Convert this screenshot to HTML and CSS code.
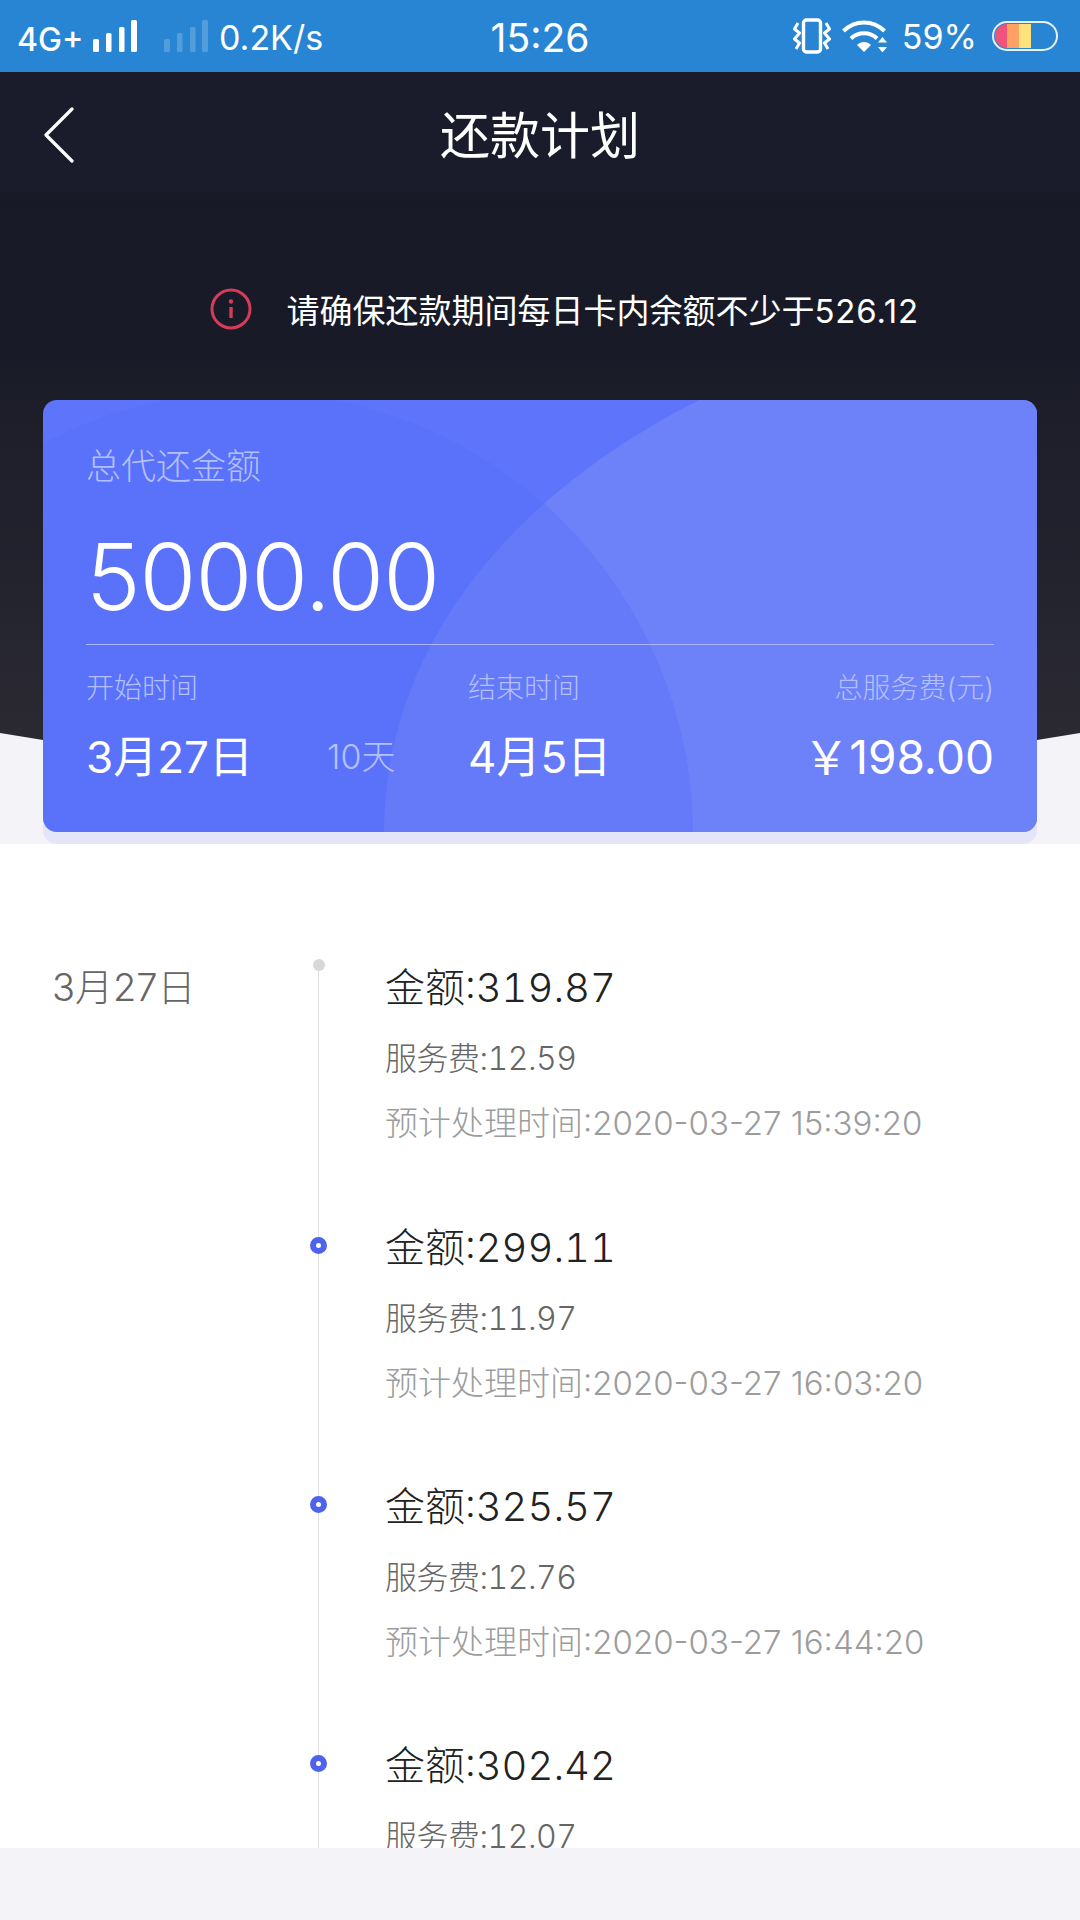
FILE: index.html
```html
<!DOCTYPE html>
<html lang="zh-CN">
<head>
  <meta charset="UTF-8">
  <meta name="viewport" content="width=device-width, initial-scale=1.0">
  <title>还款计划</title>
  <link rel="stylesheet" href="styles.css">
</head>
<body>
  <div class="page">
    <!-- Status bar -->
    <div class="status">
      <div class="status-left">
        <span class="net">4G+</span>
        <svg class="signal" width="44" height="34" viewBox="0 0 44 34" fill="#fff">
          <rect x="0" y="20" width="6" height="13" rx="1.5"/>
          <rect x="13" y="14" width="5.5" height="19" rx="1.5"/>
          <rect x="26" y="8" width="5.5" height="25" rx="1.5"/>
          <rect x="38" y="1" width="6" height="32" rx="1.5"/>
        </svg>
        <svg class="signal signal-off" width="44" height="34" viewBox="0 0 44 34" fill="#fff">
          <rect x="0" y="20" width="6" height="13" rx="1.5"/>
          <rect x="13" y="14" width="5.5" height="19" rx="1.5"/>
          <rect x="26" y="8" width="5.5" height="25" rx="1.5"/>
          <rect x="38" y="1" width="6" height="32" rx="1.5"/>
        </svg>
        <span class="speed">0.2K/s</span>
      </div>
      <div class="clock">15:26</div>
      <div class="status-right">
        <svg class="vibrate" width="38" height="36" viewBox="0 0 38 36" fill="none" stroke="#fff" stroke-width="3.4">
          <rect x="10.5" y="2" width="17" height="32" rx="3"/>
          <path d="M5 5 L1.500 11 L6.500 15 L1.500 21 L6.500 25 L3 31" stroke-linejoin="round" stroke-width="3"/>
          <path d="M33 5 L36.500 11 L31.500 15 L36.500 21 L31.500 25 L35 31" stroke-linejoin="round" stroke-width="3"/>
        </svg>
        <svg class="wifi" width="46" height="34" viewBox="0 0 46 34" fill="none" stroke="#fff" stroke-width="4">
          <path d="M1.500 12 C13 0.500 31 0.500 42.500 12"/>
          <path d="M9 19.500 C16 12.500 28 12.500 35 19.500"/>
          <path d="M22 33 L15 26 C19 22 25 22 29 26 Z" fill="#fff" stroke="none"/>
          <path d="M40.500 18 L45 23.500 L36 23.500 Z M40.500 33.500 L45 28 L36 28 Z" fill="#fff" stroke="none"/>
        </svg>
        <span class="percent">59%</span>
        <div class="battery">
          <div class="battery-fill">
            <i class="cell-red"></i><i class="cell-orange"></i><i class="cell-yellow"></i>
          </div>
        </div>
      </div>
    </div>

    <!-- Dark header with summary card -->
    <div class="hero">
      <div class="nav">
        <svg class="back" width="32" height="56" viewBox="0 0 32 56" fill="none" stroke="#fff" stroke-width="3.2" stroke-linecap="round" stroke-linejoin="round">
          <path d="M29 2 L3 28 L29 54"/>
        </svg>
        <h1>还款计划</h1>
      </div>

      <div class="notice">
        <svg width="42" height="42" viewBox="0 0 42 42" fill="none" stroke="#d63c58" stroke-width="3">
          <circle cx="21" cy="21" r="19"/>
          <circle cx="21" cy="13.500" r="2.200" fill="#d63c58" stroke="none"/>
          <path d="M21 19 V30" stroke-width="3.400"/>
        </svg>
        <span>请确保还款期间每日卡内余额不少于<span class="notice-num">526.12</span></span>
      </div>

      <div class="card">
        <svg class="card-bg" width="994" height="432" viewBox="0 0 994 432">
          <path d="M341 432 C341 270 440 110 656 0 L994 0 L994 432 Z" fill="#6d81f9"/>
          <circle cx="207" cy="435" r="443" fill="#526ef6" fill-opacity="0.35"/>
        </svg>
        <div class="card-body">
          <div class="card-label">总代还金额</div>
          <div class="card-total">5000.00</div>
          <div class="card-stats">
            <div class="stat stat-start">
              <div class="stat-label">开始时间</div>
              <div class="stat-value">3月27日</div>
            </div>
            <div class="stat-days">10天</div>
            <div class="stat stat-end">
              <div class="stat-label">结束时间</div>
              <div class="stat-value">4月5日</div>
            </div>
            <div class="stat stat-fee">
              <div class="stat-label">总服务费(元)</div>
              <div class="stat-value">￥198.00</div>
            </div>
          </div>
        </div>
      </div>
    </div>

    <!-- Timeline -->
    <div class="timeline">
      <div class="row row-first">
        <div class="row-date">3月27日</div>
        <div class="row-rail"><span class="dot dot-gray"></span></div>
        <div class="row-body">
          <div class="amount">金额:319.87</div>
          <div class="fee">服务费:12.59</div>
          <div class="eta">预计处理时间:2020-03-27 15:39:20</div>
        </div>
      </div>
      <div class="row">
        <div class="row-date"></div>
        <div class="row-rail"><span class="dot"></span></div>
        <div class="row-body">
          <div class="amount">金额:299.11</div>
          <div class="fee">服务费:11.97</div>
          <div class="eta">预计处理时间:2020-03-27 16:03:20</div>
        </div>
      </div>
      <div class="row">
        <div class="row-date"></div>
        <div class="row-rail"><span class="dot"></span></div>
        <div class="row-body">
          <div class="amount">金额:325.57</div>
          <div class="fee">服务费:12.76</div>
          <div class="eta">预计处理时间:2020-03-27 16:44:20</div>
        </div>
      </div>
      <div class="row">
        <div class="row-date"></div>
        <div class="row-rail"><span class="dot"></span></div>
        <div class="row-body">
          <div class="amount">金额:302.42</div>
          <div class="fee">服务费:12.07</div>
        </div>
      </div>
    </div>

    <div class="footer"></div>
  </div>
</body>
</html>
```

FILE: styles.css
```css
/* General */
body {
  margin: 0;
  font-family: 'Inter', 'Noto Sans CJK SC', sans-serif;
  font-weight: 300;
  background-color: #f3f3f8;
}

.page {
  width: 1080px;
  height: 1920px;
  display: flex;
  flex-direction: column;
  overflow: hidden;
}

/* Status bar */
.status {
  height: 72px;
  flex: none;
  display: grid;
  grid-template-columns: 1fr auto 1fr;
  align-items: center;
  background-color: #2885d3;
  color: #fff;
}

.status-left {
  display: flex;
  align-items: center;
  padding-left: 17px;
}

.net {
  font-size: 32px;
  font-weight: 500;
  width: 76px;
  margin-top: 6px;
}

.signal-off {
  opacity: 0.2;
  margin-left: 27px;
}

.speed {
  font-size: 34px;
  font-weight: 400;
  margin-left: 11px;
  margin-top: 3px;
}

.clock {
  font-size: 39px;
  font-weight: 400;
  margin-top: 3px;
}

.status-right {
  display: flex;
  align-items: center;
  justify-content: flex-end;
  padding-right: 22px;
}

.vibrate {
  margin-right: 11px;
}

.wifi {
  margin-right: 14px;
}

.percent {
  font-size: 34px;
  font-weight: 400;
  margin-right: 15px;
  margin-top: 1px;
}

.battery {
  width: 66px;
  height: 30px;
  box-sizing: border-box;
  border: 2px solid #e8f2fb;
  border-radius: 15px;
  padding: 1px;
  overflow: hidden;
}

.battery-fill {
  display: flex;
  width: 36px;
  height: 100%;
  border-radius: 12px 0 0 12px;
  overflow: hidden;
}

.battery-fill i {
  flex: 1;
}

.cell-red { background-color: #f2537a; }
.cell-orange { background-color: #ffa162; }
.cell-yellow { background-color: #ffe27c; }

/* Hero */
.hero {
  position: relative;
  height: 772px;
  flex: none;
  box-sizing: border-box;
}

.hero::before {
  content: "";
  position: absolute;
  left: 0;
  top: 0;
  width: 100%;
  height: 668px;
  background: linear-gradient(to bottom, #1a1c2b 0, #1a1c2b 118px, #171926 122px, #191a27 270px, #1e1e2b 340px, #24242f 528px, #2b2a33 668px);
  clip-path: polygon(0 0, 100% 0, 100% 661px, 1037px 668px, 43px 668px, 0 661px);
}

.nav {
  position: relative;
  height: 120px;
  display: flex;
  align-items: center;
  justify-content: center;
}

.nav h1 {
  margin: 0;
  font-size: 50px;
  font-weight: 400;
  color: #fff;
}

.back {
  position: absolute;
  left: 43px;
  top: 35px;
}

.notice {
  position: relative;
  display: flex;
  align-items: center;
  justify-content: flex-end;
  height: 42px;
  margin-top: 96px;
  padding-right: 161px;
  color: #fff;
  font-size: 33px;
  font-weight: 400;
}

.notice svg {
  margin-right: 34px;
}

.notice-num {
  letter-spacing: 0.8px;
}

/* Summary card */
.card {
  position: relative;
  width: 994px;
  height: 432px;
  margin: 70px 0 0 43px;
  color: #fff;
  border-radius: 14px;
  overflow: hidden;
  background-color: #5e75fb;
  box-shadow: 0 12px 0 #e4e6f7;
}

.card-bg {
  position: absolute;
  left: 0;
  top: 0;
}

.card-body {
  position: relative;
  padding: 0 43px;
}

.card-label {
  padding-top: 42px;
  font-size: 35px;
  line-height: 48px;
  color: #b4c0fb;
}

.card-total {
  margin-top: 31px;
  font-size: 92px;
  line-height: 112px;
  letter-spacing: -1px;
}

.card-stats {
  display: flex;
  margin-top: 11px;
  padding-top: 23px;
  border-top: 1px solid #a9b6fb;
}

.stat-label {
  font-size: 28px;
  line-height: 40px;
  color: #b4c0fb;
}

.stat-value {
  margin-top: 19px;
  font-size: 44px;
  line-height: 60px;
  font-weight: 400;
}

.stat-start {
  width: 241px;
}

.stat-days {
  width: 141px;
  margin-top: 59px;
  font-size: 34px;
  line-height: 60px;
  color: #b4c0fb;
}

.stat-fee {
  margin-left: auto;
  text-align: right;
}

.stat-fee .stat-value {
  font-size: 46px;
}

/* Timeline */
.timeline {
  position: relative;
  flex: 1;
  padding-top: 115px;
  background-color: #fff;
  overflow: hidden;
}

.timeline::before {
  content: "";
  position: absolute;
  left: 318px;
  top: 121px;
  bottom: 0;
  width: 1px;
  background-color: #dfdfe4;
}

.row {
  position: relative;
  display: flex;
  height: 259px;
}

.row-first {
  height: 260px;
}

.row-date {
  width: 290px;
  box-sizing: border-box;
  padding-left: 52px;
  font-size: 38px;
  line-height: 56px;
  color: #666;
}

.row-rail {
  width: 57px;
  display: flex;
  justify-content: center;
  align-items: flex-start;
  padding-top: 18px;
  box-sizing: border-box;
}

.row-first .row-rail {
  padding-top: 0;
}

.dot {
  width: 17px;
  height: 17px;
  box-sizing: border-box;
  border-radius: 50%;
  border: 6px solid #4e63ec;
  background-color: #fff;
}

.dot-gray {
  width: 12px;
  height: 12px;
  border: none;
  background-color: #d8d8d8;
}

.row-body {
  margin-left: 38px;
  padding-top: 1px;
}

.amount {
  font-size: 40px;
  line-height: 56px;
  color: #222;
  font-variant-numeric: tabular-nums;
}

.fee {
  margin-top: 20px;
  font-size: 32px;
  line-height: 46px;
  color: #666;
  font-variant-numeric: tabular-nums;
  letter-spacing: -0.5px;
}

.eta {
  margin-top: 18px;
  font-size: 33px;
  line-height: 46px;
  color: #9c9c9c;
}

.footer {
  height: 72px;
  flex: none;
  background-color: #f3f3f8;
}
```
